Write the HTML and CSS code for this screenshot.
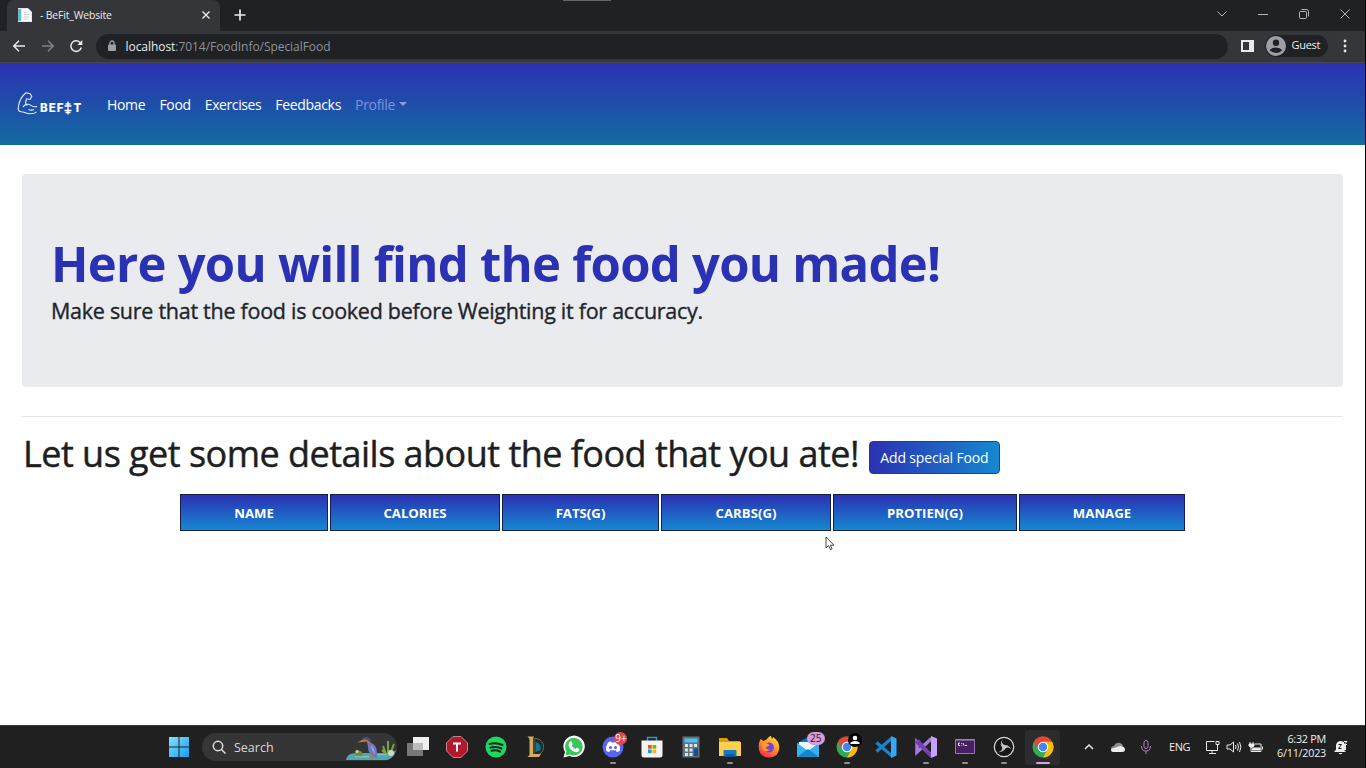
FILE: index.html
```html
<!DOCTYPE html>
<html lang="en">
<head>
<meta charset="utf-8">
<title>- BeFit_Website</title>
<link rel="stylesheet" href="styles.css">
</head>
<body>
<div class="screen">
  <header class="tabstrip">
    <div class="tab">
      <svg class="favicon" viewBox="0 0 16 16"><path fill="#dce9ee" d="M1 1h10l4 4v10H1z"/><path fill="#6fb3cf" d="M1 2h3v12H1z"/><path fill="#fff" d="M5 2h6l3 3v9H5z"/><path stroke="#c3ced4" d="M7 5h3M7 7.500h5M7 10h5M7 12h4"/></svg>
      <span class="tab-title">- BeFit_Website</span>
      <svg class="tab-close" viewBox="0 0 10 10"><path d="M1.500 1.500l7 7M8.500 1.500l-7 7"/></svg>
    </div>
    <svg class="newtab" viewBox="0 0 12 12"><path d="M6 .5v11M.5 6h11"/></svg>
    <div class="winbuttons">
      <svg viewBox="0 0 12 12"><path d="M1.500 3.500L6 8l4.500-4.500"/></svg>
      <svg viewBox="0 0 12 12"><path d="M1 6.500h10"/></svg>
      <svg viewBox="0 0 12 12"><rect x="1.500" y="3.500" width="7" height="7" rx="1"/><path d="M3.500 1.500h5q2 0 2 2v5"/></svg>
      <svg viewBox="0 0 12 12"><path d="M1.500 1.500l9 9M10.500 1.500l-9 9"/></svg>
    </div>
    <i class="drag-mark"></i>
  </header>
  <div class="toolbar">
    <svg class="nav-icon" viewBox="0 0 14 14"><path d="M13 7H2M7 1.800L1.800 7 7 12.200"/></svg>
    <svg class="nav-icon dim" viewBox="0 0 14 14"><path d="M1 7h11M7 1.800L12.200 7 7 12.200"/></svg>
    <svg class="nav-icon" viewBox="0 0 14 14"><path d="M12.300 8.500a5.300 5.300 0 1 1-1.500-5.300L12.500 5"/><path class="solid" d="M13.300 1v5h-5z"/></svg>
    <div class="omnibox">
      <svg class="lock" viewBox="0 0 10 12"><rect x="1" y="4.500" width="8" height="6.500" rx="1" fill="#9aa0a6"/><path d="M3 5V3a2 2 0 0 1 4 0v2" fill="none" stroke="#9aa0a6" stroke-width="1.300"/></svg>
      <span class="url"><b>localhost</b>:7014/FoodInfo/SpecialFood</span>
    </div>
    <svg class="panel" viewBox="0 0 13 12"><path fill="#e8eaed" fill-rule="evenodd" d="M0 0h13v12H0zM2 2v8h6V2z"/></svg>
    <div class="profile">
      <svg viewBox="0 0 20 20"><circle cx="10" cy="10" r="10" fill="#9aa0a6"/><circle cx="10" cy="6.800" r="3.200" fill="#202124"/><path fill="#202124" d="M3.800 14q2-2.500 6.200-2.500t6.200 2.500q-2.200 3-6.200 3t-6.200-3z"/></svg>
      <span>Guest</span>
    </div>
    <svg class="dots" viewBox="0 0 4 14"><circle cx="2" cy="2" r="1.400"/><circle cx="2" cy="7" r="1.400"/><circle cx="2" cy="12" r="1.400"/></svg>
  </div>

  <nav class="navbar">
    <a class="brand">
      <svg class="arm" viewBox="0 0 22 24"><path d="M9.500 6.800l3.600.7 1.700-3.200-1.700-2.500-4-1C5.500 3.500 2.500 8.500 1.500 14c-.9 4 .2 5.500 2.500 5.800 4 .2 5 2 9 2 3.200 0 5-.7 6.500-2M9.500 6.800L8.500 11l1.500 2.500M6 15q1.500-3 5.500-2.800c3 .3 2.500 3.600 8.500 2.300M11.500 17.500q3 1.300 5.500 0"/></svg>
      <span class="brand-text">BEF<svg class="barbell" viewBox="0 0 8 14"><path d="M4 .5v13M1.500 3h5M.5 5h7M.5 9.500h7M1.500 11.500h5"/></svg>T</span>
    </a>
    <div class="links">
      <a class="link">Home</a><a class="link">Food</a><a class="link exercises">Exercises</a><a class="link">Feedbacks</a><a class="link muted">Profile<i class="caret"></i></a>
    </div>
  </nav>

  <main class="page">
    <section class="jumbotron">
      <h1>Here you will find the food you made!</h1>
      <p>Make sure that the food is cooked before Weighting it for accuracy.</p>
    </section>
    <hr>
    <div class="details">
      <h2>Let us get some details about the food that you ate!</h2>
      <a class="btn">Add special Food</a>
    </div>
    <div class="table">
      <div>NAME</div><div>CALORIES</div><div>FATS(G)</div><div>CARBS(G)</div><div>PROTIEN(G)</div><div>MANAGE</div>
    </div>
  </main>

  <footer class="taskbar">
    <svg class="start" viewBox="0 0 22 22"><defs><linearGradient id="win" x2="1" y2="1"><stop stop-color="#7fe3ff"/><stop offset="1" stop-color="#1a9bf0"/></linearGradient></defs><path fill="url(#win)" d="M1 1h9.500v9.500H1zM11.500 1H21v9.500h-9.500zM1 11.500h9.500V21H1zM11.500 11.500H21V21h-9.500z"/></svg>
    <div class="search">
      <svg class="glass" viewBox="0 0 14 14"><circle cx="6" cy="6" r="4.700"/><path d="M9.500 9.500l4 4"/></svg>
      <span>Search</span>
      <svg class="heron" viewBox="0 0 52 28">
        <path fill="#4fa9b0" d="M1 27q1-7 10-7h30q7 0 10-3-2 8-9 10z"/><path fill="#78c4c0" d="M10 23h14v1.500H10zM30 21h12v1.200H30z"/>
        <path fill="#6d8f3c" d="M9 21l4-4 4 2 1 3q-4 3-9-1z"/><circle cx="12" cy="18.500" r="1.600" fill="#d8cf8a"/>
        <path fill="#c7793f" d="M12 9.500l8-4q3-1 4 1l2 4-3 3-1-5z"/><path fill="#4b4f86" d="M17 6q5-4 8 0l1 4-4-3z"/>
        <path fill="#6e78bd" d="M24 9q8 2 8 11 0 4 1 6-6-2-9-7-2-5 0-10z"/><path fill="#98a3d8" d="M26 12q4 4 4 9-4-4-4-9z"/><path stroke="#b3763d" d="M26 20v6M28 21v5"/>
        <path stroke="#75a83f" stroke-width="2" d="M41 21l-3-8M43 21V8M45 21l4-10M41 21l-4-4"/><circle cx="46" cy="20" r="3" fill="#d3d7b4"/>
      </svg>
    </div>
    <div class="apps">
      <div class="app"><svg viewBox="0 0 24 24"><path fill="#f0f0f0" d="M7 2h16v13H7z"/><path fill="#777" d="M1 8h16v13H1z"/><path fill="#bdbdbd" d="M7 8h10v7H7z"/></svg></div>
      <div class="app"><svg viewBox="0 0 24 24"><path fill="#b3192d" stroke="#d9a0a8" stroke-width=".8" d="M8 1.500h8L22.500 8v8L16 22.500H8L1.500 16V8z"/><path stroke="#fff" stroke-width="2" d="M8 8.500h8M12 8v8.500"/></svg></div>
      <div class="app"><svg viewBox="0 0 24 24"><circle cx="12" cy="12" r="10.500" fill="#1ed760"/><path fill="none" stroke="#17251b" stroke-linecap="round" stroke-width="2" d="M5.500 9q7-2 13 1M6.500 12.500q6-1.600 11 1M7.500 15.800q5-1.200 8.500.9"/></svg></div>
      <div class="app"><svg viewBox="0 0 24 24"><path fill="#102f3c" stroke="#8f7334" stroke-width=".8" d="M11 3.500a8.500 8.500 0 0 1 5 16h-5z"/><path fill="#15778c" d="M12.500 7q6 1 5 8l-5 2z"/><path fill="#d3ac5b" d="M4.500 1.500h6.500L10 3.500V19h8l-2 3H4.500L6.500 20V4z"/></svg></div>
      <div class="app"><svg viewBox="0 0 24 24"><path fill="#fff" d="M1.500 22.500L3 17A10.700 10.700 0 1 1 7.500 21z"/><path fill="#3bc659" d="M3.500 20.500l1-4a8.800 8.800 0 1 1 3.300 3z"/><path fill="#fff" d="M8 6.500l1.500-.2 1.200 3-1 1.200q1.300 2.400 3.800 3.500l1.300-1.300 2.700 1.300q-.2 3-3 3.200Q8 16.500 6.500 10 6.800 7.500 8 6.500z"/></svg></div>
      <div class="app run"><svg viewBox="0 0 24 24"><circle cx="12" cy="12" r="10.500" fill="#5865f2"/><path fill="#fff" d="M7 7.500q2-1 3-.9l.5 1h3l.5-1q1 0 3 .9 2.500 4 2 8-2 1.500-3.300 1.500l-1-1.700h-5.400l-1 1.700Q7 17 5 15.500q-.5-4 2-8z"/><circle cx="9.500" cy="12.500" r="1.500" fill="#5865f2"/><circle cx="14.500" cy="12.500" r="1.500" fill="#5865f2"/></svg><b class="badge red">9+</b></div>
      <div class="app"><svg viewBox="0 0 24 24"><path fill="none" stroke="#2d91d2" stroke-width="1.500" d="M7.500 7V2.500h9V7"/><path fill="#f4f4f4" d="M1.500 5.500h21V20q0 2.500-2.500 2.500H4q-2.500 0-2.500-2.500z"/><path fill="#f25022" d="M8 10h3.700v3.700H8z"/><path fill="#7fba00" d="M12.500 10h3.700v3.700h-3.700z"/><path fill="#00a4ef" d="M8 14.500h3.700v3.700H8z"/><path fill="#ffb900" d="M12.500 14.500h3.700v3.700h-3.700z"/></svg></div>
      <div class="app"><svg viewBox="0 0 24 24"><path fill="#62717c" d="M3.500 1.500h17v21h-17z"/><path fill="#4cc2ef" d="M5.500 3.500h13v4h-13z"/><path stroke="#dce4e8" stroke-width="3" stroke-dasharray="3 1.500" d="M6 10.500h12M6 15h9M6 19.500h9"/><path fill="#164f91" d="M15 13.500h4V21h-4z"/></svg></div>
      <div class="app run"><svg viewBox="0 0 24 24"><path fill="#dc9b17" d="M1 3h8l2 3h11v8H1z"/><path fill="#ffd04c" d="M1 7h22v14H1z"/><path fill="#1478c8" d="M5.500 16q0-1 1-1h11q1 0 1 1v5.500h-13z"/><path fill="#0d599d" d="M8 19h8v2.500H8z"/></svg></div>
      <div class="app"><svg viewBox="0 0 24 24"><defs><linearGradient id="fire" x1=".8" x2=".2" y2="1"><stop stop-color="#ffde3d"/><stop offset=".5" stop-color="#ff8a24"/><stop offset="1" stop-color="#ef245c"/></linearGradient></defs><path fill="url(#fire)" d="M3.500 4l3 2 3-1.500Q12 1 14 1l1 3q1-1 1-2 6 4 6.300 10 0 10-10.300 10.500Q2 22 1.700 12 1.500 8 3.500 4z"/><circle cx="12" cy="12.500" r="5" fill="#7542d8"/><path fill="#ff9a28" d="M5 8l6 .5 1.500 2-4 2q2 3 5 2-5 4-8-1z"/></svg></div>
      <div class="app"><svg viewBox="0 0 24 24"><path fill="#1670b8" d="M1 8l11-6 11 6v14H1z"/><path fill="#e9f8ff" d="M3 7h19v9H3z"/><path fill="#36b3ed" d="M1 8l11 8 11-8v14H1z"/><path fill="#1684cd" d="M1 22l11-8 11 8z"/></svg><b class="badge pink">25</b></div>
      <div class="app run"><svg viewBox="0 0 24 24"><use href="#chrome"/></svg><svg class="person" viewBox="0 0 14 14"><circle cx="7" cy="7" r="7" fill="#000"/><circle cx="7" cy="5" r="2.300" fill="#fff"/><path fill="#fff" d="M2.500 11V9.500Q4 8 7 8t4.500 1.500V11z"/></svg></div>
      <div class="app"><svg viewBox="0 0 24 24"><path fill="none" stroke="#1684cf" stroke-width="3.200" d="M18 3L2.500 16.500M18 21L2.500 7.500"/><path fill="#32a9f2" d="M17 1l5.500 2.500v17L17 23z"/></svg></div>
      <div class="app run"><svg viewBox="0 0 24 24"><path fill="none" stroke="#a67be4" stroke-width="3.500" d="M17.500 3.500L3 17V7l14.500 13.500"/><path fill="#7441ad" d="M1.500 6L5 4.500 17 18v5L1.500 8z"/><path fill="#c6a1ff" d="M17 1l6 2.500v17L17 23z"/></svg></div>
      <div class="app run"><svg viewBox="0 0 24 24"><path fill="#462061" stroke="#9775ad" d="M2.500 4.500h19v14h-19z"/><path stroke="#ad92bf" d="M3 5h18"/><path stroke="#fff" fill="none" stroke-width=".9" d="M7 8H5.500v2.500H7M8.500 8.200v.7M8.500 10v.6M10 8l1 2.600M12 10.500h2"/></svg></div>
      <div class="app run"><svg viewBox="0 0 24 24"><circle cx="12" cy="12" r="9.700" fill="#161616" stroke="#d8d8d8" stroke-width="1.200"/><g id="blade"><path fill="#c9c9c9" d="M10.500 4.500Q7 9 12 12q3 .5 4-2-4 1-5.500-1.500-1-2 0-4z"/></g><use href="#blade" transform="rotate(120 12 12)"/><use href="#blade" transform="rotate(240 12 12)"/></svg></div>
      <div class="app active"><svg viewBox="0 0 24 24"><g id="chrome"><circle cx="12" cy="12" r="10.500" fill="#34a853"/><path fill="#ea4335" d="M2.900 6.750A10.500 10.500 0 0 1 21.100 6.750L12 7 7.500 14.500z"/><path fill="#fbbc04" d="M21.100 6.750A10.500 10.500 0 0 1 12 22.500l4.400-8L12 6.750z"/><circle cx="12" cy="12" r="5.300" fill="#fff"/><circle cx="12" cy="12" r="4.200" fill="#4285f4"/></g></svg></div>
    </div>
    <div class="tray">
      <svg class="chev" viewBox="0 0 10 10"><path d="M1 7l4-4 4 4"/></svg>
      <svg class="cloud" viewBox="0 0 16 12"><path fill="#8f8f8f" d="M1 8q0-3 3-3 2-4 6-3 3 1 3 3l-8 5z"/><path fill="#eee" d="M3 11q-2 0-2-2t3-2q4-1 6-2 5 0 5 3.500 0 2.500-3 2.500z"/></svg>
      <svg class="mic" viewBox="0 0 12 16"><rect x="4" y="1.500" width="4" height="8" rx="2"/><path d="M1.500 7q0 5 4.500 5t4.500-5M6 12v3"/></svg>
      <span class="lang">ENG</span>
      <svg class="net" viewBox="0 0 16 16"><path d="M9.500 2.500h-8v9h11v-3M7 11.500v3M4 14.500h7M11 2.500h3v3h-3zM12.500 5.500v6"/></svg>
      <svg class="vol" viewBox="0 0 16 14"><path d="M1 5h3l3.500-3v10L4 9H1zM9.500 5q1 2 0 4M11.500 3.500q2 3.500 0 7M13.500 2q2.800 5 0 10"/></svg>
      <svg class="bat" viewBox="0 0 16 14"><path d="M6.500 4H13v7.500H3V7M14.500 6.500v3"/><path fill="#eee" d="M5 8h7v2H4zM1 4h5v2q-2.500 3-5 0z"/><path d="M2 2v2M5 2v2"/></svg>
      <div class="clock"><span>6:32 PM</span><span>6/11/2023</span></div>
      <svg class="bell" viewBox="0 0 14 15"><path fill="#eee" d="M0 12l2-2.500V5q1-4 5-4l3 1v8l2 2zM4.500 13h4q-2 2.500-4 0z"/><path fill="#eee" d="M8 5h4v5H8z"/><path fill="none" stroke="#202020" d="M4.500 4.500h3l-3 4h3"/><path fill="none" stroke="#eee" d="M10 1.500h3l-3 3h3"/></svg>
    </div>
  </footer>

  <svg class="cursor" viewBox="0 0 10 15"><path fill="#fff" stroke="#333" stroke-width=".9" d="M1 1v11l2.600-2.300 1.900 4 1.600-.8-1.800-3.700H9z"/></svg>
</div>
</body>
</html>
```
FILE: styles.css
```css
*{box-sizing:border-box}
body{margin:0;background:#000;font-family:"Open Sans","Noto Sans",sans-serif}
.screen{width:1366px;height:768px;overflow:hidden;display:flex;flex-direction:column;position:relative}
svg{flex:none;display:block}

/* browser window */
.tabstrip{height:31px;background:#202124;display:flex;align-items:center;position:relative;margin-right:1px;flex:none}
.tab{margin-left:7px;width:213px;height:31px;background:#35363a;border-radius:7px 7px 0 0;display:flex;align-items:center;padding:0 9px 2px 10px}
.favicon{width:16px;height:16px}
.tab-title{font-size:10.5px;letter-spacing:-.18px;color:#e8eaed;margin-left:7px}
.tab-close{width:10px;height:10px;margin-left:auto;stroke:#e8eaed;stroke-width:1.4}
.newtab{width:12px;height:12px;margin:0 0 1px 14px;stroke:#e8eaed;stroke-width:1.7}
.winbuttons{margin-left:auto;display:flex;gap:29px;padding:0 14px 4px 0}
.winbuttons svg{width:12px;height:12px;fill:none;stroke:#c4c5c8;stroke-width:.9}
.drag-mark{position:absolute;left:563px;top:0;width:48px;height:1px;background:#666}
.toolbar{height:32px;background:#35363a;display:flex;align-items:center;padding:0 0 1px 12px;border-bottom:1px solid #46474f;margin-right:1px;flex:none}
.nav-icon{width:14px;height:14px;margin-right:14.5px;fill:none;stroke:#e8eaed;stroke-width:1.5}
.dim{stroke:#808286}
.solid{fill:#e8eaed;stroke:none}
.omnibox{width:1132px;height:25px;border-radius:13px;background:#202124;display:flex;align-items:center;padding-left:11px;margin-left:-2px}
.lock{width:10px;height:12px}
.url{margin-left:9px;font-size:12px;letter-spacing:-.05px;color:#8e9297}
.url b{font-weight:400;color:#e8eaed}
.panel{width:13px;height:12px;margin-left:13px}
.profile{display:flex;align-items:center;width:63px;height:22px;border-radius:11px;background:#202124;margin-left:11px;font-size:11px;line-height:20px;letter-spacing:-.3px;color:#e8eaed;gap:6px}
.profile span{padding-bottom:2px}
.profile svg{width:20px;height:20px;margin-left:1px}
.dots{width:4px;height:14px;margin-left:15px;fill:#e8eaed}

/* site navigation */
.navbar{height:82px;flex:none;margin-right:1px;background:linear-gradient(#2b31b3,#136ba0);display:flex;align-items:center;padding-left:17px}
.brand{display:flex;align-items:center;width:90px}
.arm{width:22px;height:24px;fill:none;stroke:#e8eefc;stroke-width:1.1}
.brand-text{font:800 11.5px/14px Inter,sans-serif;letter-spacing:1px;color:#fff;display:flex;align-items:center;padding:7px 0 0 1px}
.barbell{width:8px;height:14px;margin-right:1px;fill:none;stroke:#fff;stroke-width:1.3}
.links{display:flex;gap:14.1px}
.link{font-size:14px;letter-spacing:-.32px;color:#fff;white-space:nowrap}
.exercises{letter-spacing:-.42px}
.muted{color:#7f92dc;display:flex;align-items:center}
.caret{border:4px solid transparent;border-top-color:#8d9ddc;border-bottom:0;margin-left:4px}

/* page content */
.page{height:580px;margin-right:1px;background:#fff;padding:29px 22px;color:#212529;flex:none}
.jumbotron{height:213px;background:#e9ebee;border-radius:4px;padding:62px 29px}
h1{font-size:49px;line-height:54px;letter-spacing:-.73px;margin:0;color:#2b31b3}
p{font-size:21.5px;line-height:30px;letter-spacing:-.27px;margin:6px 0 0;-webkit-text-stroke:.35px #212529}
hr{border:0;border-top:1px solid #e5e5e5;margin:29px 0 15px}
.details{display:flex;align-items:flex-start;height:44px}
h2{font-size:36px;font-weight:400;letter-spacing:-.525px;margin:0 0 0 1px;line-height:44px;color:#1c1f22;-webkit-text-stroke:.45px #1c1f22}
.btn{font-size:14px;letter-spacing:-.15px;line-height:32px;width:131px;height:33px;margin:9px 0 0 10px;border:1px solid #303f68;border-radius:4px;background:linear-gradient(90deg,#2b31b3,#1588d0);color:#fff;text-align:center}
.table{display:grid;grid-template-columns:148px 170px 157px 170px 184px 166px;gap:2px;width:1005px;margin:18px 0 0 158px}
.table div{height:37px;line-height:37px;border:1px solid #14204a;background:linear-gradient(#2b31b3,#1588d0);color:#fff;font-size:13.2px;font-weight:700;text-align:center}

/* taskbar */
.taskbar{height:43px;flex:none;margin-right:1px;background:#202020;border-top:1px solid #3a3c3c;display:flex;align-items:center;padding-left:167.5px;color:#eee}
.start{width:22px;height:22px}
.search{width:195px;height:28px;margin:0 1px 0 12.5px;border-radius:14px;background:#353535;display:flex;align-items:center;padding-left:10px;font-size:12.5px;overflow:hidden;color:#d8d8d8}
.search span{margin-left:8px}
.glass{width:14px;height:14px;fill:none;stroke:#e0e0e0;stroke-width:1.5}
.heron{width:52px;height:28px;margin-left:auto}
.apps{display:flex}
.app{width:39.08px;height:42px;position:relative;display:flex;align-items:center;justify-content:center}
.app>svg{width:24px;height:24px}
.run::after,.active::after{content:"";position:absolute;bottom:4px;width:6px;height:2px;border-radius:1px;background:#8f8f8f}
.active::after{width:14px;background:#d7a0df}
.active::before{content:"";position:absolute;left:2px;top:4px;width:35px;height:35px;border-radius:3px;background:#2c2c2c}
.active>svg{position:relative}
.badge{position:absolute;height:13px;border-radius:7px;font-size:10px;line-height:13px;font-weight:400;text-align:center;top:6px}
.red{left:21px;width:13px;background:#dc4850;color:#fff}
.pink{left:18px;width:18px;background:#d99ad9;color:#222}
.app>.person{position:absolute;width:14px;height:14px;left:20px;top:7px}
.tray{display:flex;align-items:center;margin-left:auto;padding-right:17px}
.tray svg{fill:none;stroke:#e8e8e8}
.tray .chev{width:10px;height:10px;stroke-width:1.5}
.tray .cloud{width:16px;height:12px;margin-left:16px;stroke:none}
.tray .mic{width:12px;height:16px;margin-left:14px;stroke:#b77fc0}
.lang{font-size:11px;width:22px;letter-spacing:-.4px;margin-left:17px;padding-bottom:1px}
.tray .net{width:16px;height:16px;margin-left:14px}
.tray .vol{width:16px;height:14px;margin-left:5px}
.tray .bat{width:16px;height:14px;margin-left:6px}
.clock{width:58px;margin-left:4px;padding-bottom:2px;display:flex;flex-direction:column;align-items:flex-end;font-size:10.8px;line-height:14px;letter-spacing:-.25px}
.tray .bell{width:14px;height:15px;margin-left:8px;stroke:none}
.cursor{position:absolute;left:825px;top:536px;width:10px;height:15px}
```
